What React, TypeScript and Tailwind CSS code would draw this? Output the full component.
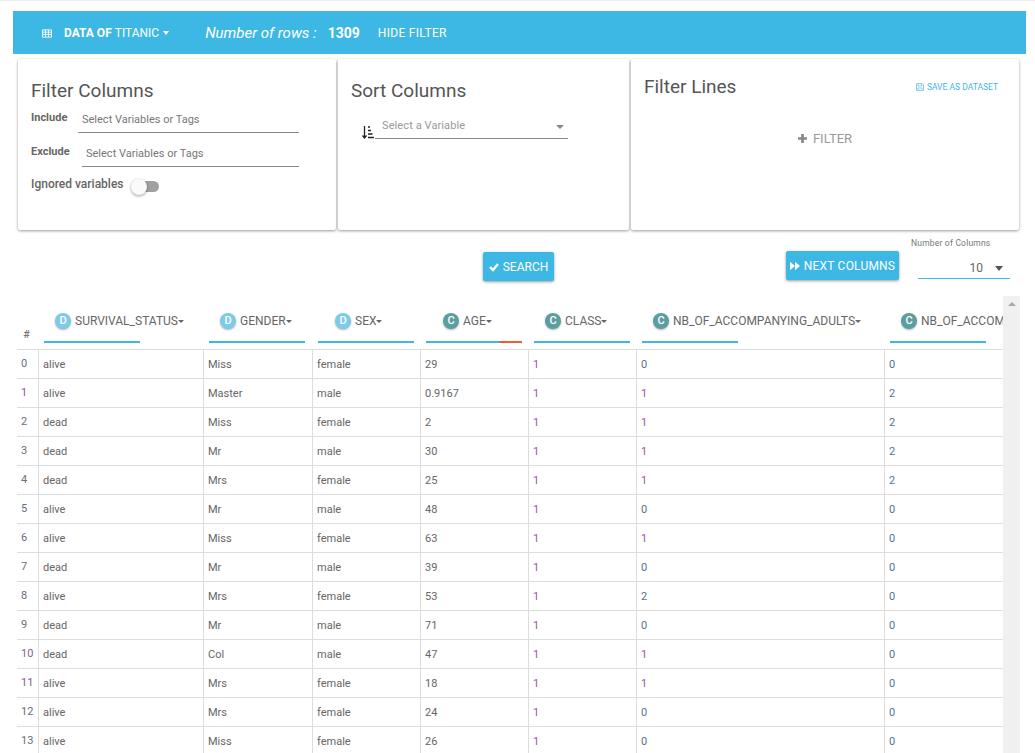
const rows = [
  ["0", "alive", "Miss", "female", "29", "1", "0", "0"],
  ["1", "alive", "Master", "male", "0.9167", "1", "1", "2"],
  ["2", "dead", "Miss", "female", "2", "1", "1", "2"],
  ["3", "dead", "Mr", "male", "30", "1", "1", "2"],
  ["4", "dead", "Mrs", "female", "25", "1", "1", "2"],
  ["5", "alive", "Mr", "male", "48", "1", "0", "0"],
  ["6", "alive", "Miss", "female", "63", "1", "1", "0"],
  ["7", "dead", "Mr", "male", "39", "1", "0", "0"],
  ["8", "alive", "Mrs", "female", "53", "1", "2", "0"],
  ["9", "dead", "Mr", "male", "71", "1", "0", "0"],
  ["10", "dead", "Col", "male", "47", "1", "1", "0"],
  ["11", "alive", "Mrs", "female", "18", "1", "1", "0"],
  ["12", "alive", "Mrs", "female", "24", "1", "0", "0"],
  ["13", "alive", "Miss", "female", "26", "1", "0", "0"],
]

const widths = ["w-[22px]", "w-[165px]", "w-[109px]", "w-[108px]", "w-[108px]", "w-[108px]", "w-[248px]", "w-[119px]"]

function Caret({ className }: { className: string }) {
  return <span className={`inline-block h-0 w-0 border-x-transparent ${className}`} />
}

function ColumnHead({ kind, name, width, pad, caret = true, warn = false }: { kind: string; name: string; width: string; pad: string; caret?: boolean; warn?: boolean }) {
  const badge = kind === "D" ? "bg-[#7ccbe9]" : "bg-[#5b9ea0]"
  return (
    <div className={`shrink-0 ${width}`}>
      <div className={`flex h-[26px] items-center whitespace-nowrap ${pad}`}>
        <span className={`mr-[4px] flex h-4 w-4 shrink-0 items-center justify-center rounded-full text-[11px] font-medium text-white shadow-[0_1px_2px_rgba(0,0,0,0.3)] ${badge}`}>{kind}</span>
        <span className="text-xs text-[#666]">{name}</span>
        {caret && <Caret className="border-x-[3px] border-t-[3px] border-t-[#666]" />}
      </div>
      <div className="ml-[5px] mt-[7px] flex h-[2px] w-[96px] bg-[#3db7e4]">
        {warn && <div className="ml-auto h-full w-[23px] bg-[#ee5d35]" />}
      </div>
    </div>
  )
}

// thin digits come out tinted in the reference
function cellColor(i: number, value: string) {
  if (i === 0) return value === "1" || value === "10" || value === "11" ? "text-[#85608f] -mt-[2px]" : "text-[#62707e] -mt-[2px]"
  if (i >= 5) return value === "1" ? "text-[#96589e]" : "text-[#56748f]"
  return "text-[#666]"
}

export default function App() {
  return (
    <div className="h-[753px] w-[1035px] overflow-hidden bg-white font-['Roboto','Liberation_Sans',sans-serif]">
      <div className="h-px bg-[#eee]" />
      <div className="ml-[13px] mt-[10px] flex h-[43px] w-[1013px] items-center bg-[#3db7e4] pl-[29px] pt-px text-white">
        <svg viewBox="0 0 11 9" className="h-[9px] w-[10px]" fill="none" stroke="white" strokeWidth="1">
          <path d="M.5.5h10v8H.5zM.5 3h10M.5 5.500h10M3.800 .5v8M7.200 .5v8" />
        </svg>
        <span className="ml-[12px] text-xs font-bold">DATA OF <span className="font-normal">TITANIC</span></span>
        <Caret className="ml-[4px] border-x-[3px] border-t-[4px] border-t-white" />
        <span className="ml-[36px] text-[15px] italic">Number of rows :</span>
        <span className="ml-[11px] text-sm font-bold">1309</span>
        <span className="ml-[18px] text-xs tracking-[0.3px]">HIDE FILTER</span>
      </div>

      <div className="ml-[18px] mt-[5px] flex h-[171px] w-[1001px] gap-[2px]">
        <div className="w-[318px] rounded-[2px] bg-white pl-[13px] pt-[20px] shadow-[0_1px_3px_rgba(0,0,0,0.4)]">
          <h2 className="text-[19px] leading-[24px] text-[#555]">Filter Columns</h2>
          <div className="mt-[5px] flex items-start">
            <span className="mt-[2px] w-[47px] text-[11px] font-bold leading-[16px] text-[#666]">Include</span>
            <div className="h-[25px] w-[221px] border-b border-[#888] pl-[4px] text-[11px] leading-[23px] text-[#777]">Select Variables or Tags</div>
          </div>
          <div className="mt-[9px] flex items-start">
            <span className="mt-[2px] w-[51px] text-[11px] font-bold leading-[16px] text-[#666]">Exclude</span>
            <div className="h-[25px] w-[217px] border-b border-[#888] pl-[4px] text-[11px] leading-[23px] text-[#777]">Select Variables or Tags</div>
          </div>
          <div className="mt-[9px] flex items-start">
            <span className="text-xs font-medium leading-[16px] text-[#666]">Ignored variables</span>
            <div className="relative ml-[8px] mt-[5px] h-[11px] w-[27px] rounded-full bg-[#a0a0a0]">
              <div className="absolute -left-[1px] -top-[2px] h-[16px] w-[16px] rounded-full bg-[#fafafa] shadow-[0_1px_3px_rgba(0,0,0,0.4)]" />
            </div>
          </div>
        </div>

        <div className="w-[291px] rounded-[2px] bg-white pl-[13px] pt-[20px] shadow-[0_1px_3px_rgba(0,0,0,0.4)]">
          <h2 className="text-[19px] leading-[24px] text-[#555]">Sort Columns</h2>
          <div className="ml-[11px] mt-[11px] flex items-end">
            <svg viewBox="0 0 12 13" className="h-[13px] w-3" fill="none" stroke="#222" strokeWidth="1.300">
              <path d="M2.500 0v12M.5 9.500l2 2.500 2-2.500M6 1h2M6 4.500h3M6 8h4.500M6 11.500h6" />
            </svg>
            <div className="ml-px flex h-[25px] w-[193px] items-start justify-between border-b border-[#888] pl-[7px] pr-[4px] text-[11px] leading-[23px] tracking-[0.1px] text-[#999]">
              <span>Select a Variable</span>
              <Caret className="mt-[11px] border-x-[4px] border-t-[4px] border-t-[#888]" />
            </div>
          </div>
        </div>

        <div className="w-[388px] rounded-[2px] bg-white pl-[13px] pt-[16px] shadow-[0_1px_3px_rgba(0,0,0,0.4)]">
          <div className="flex h-[24px] items-center justify-between pr-[21px]">
            <h2 className="text-[19px] leading-[24px] text-[#555]">Filter Lines</h2>
            <span className="flex items-center gap-[3px] text-[8.500px] text-[#3db7e4]">
              <svg viewBox="0 0 8 8" className="h-2 w-2" fill="none" stroke="#8ccde8" strokeWidth="1"><path d="M.5.5h5.500l1.500 1.500v5.500h-7zM2 .5v2.500h3.500V.5M2 7.500V5h4v2.500" /></svg>
              SAVE AS DATASET
            </span>
          </div>
          <div className="mt-[30px] flex h-[20px] items-center justify-center pr-[13px] text-[13px] text-[#999]">
            <svg viewBox="0 0 10 10" className="mb-[2px] mr-[6px] h-[9px] w-[9px]" fill="#888"><path d="M3.500 0h3v3.500H10v3H6.500V10h-3V6.500H0v-3h3.500z" /></svg>
            FILTER
          </div>
        </div>
      </div>

      <div className="relative h-[66px]">
        <div className="absolute left-[483px] top-[22px] flex h-[29px] w-[71px] items-center justify-center gap-[4px] rounded-[2px] bg-[#3db7e4] text-xs text-white shadow-[0_1px_3px_rgba(0,0,0,0.4)]">
          <svg viewBox="0 0 10 10" className="h-[10px] w-[10px]" fill="none" stroke="white" strokeWidth="2.400"><path d="M1 5l3 3 5-6" /></svg>
          SEARCH
        </div>
        <div className="absolute left-[786px] top-[21px] flex h-[29px] w-[113px] items-center justify-center gap-[4px] rounded-[2px] bg-[#3db7e4] text-xs tracking-[0.2px] text-white shadow-[0_1px_3px_rgba(0,0,0,0.4)]">
          <svg viewBox="0 0 12 10" className="h-[10px] w-[10px]" fill="white"><path d="M0 0l6 5-6 5zM6 0l6 5-6 5z" /></svg>
          NEXT COLUMNS
        </div>
        <div className="absolute left-[911px] top-[7px] text-[8.500px] tracking-[0.2px] text-[#777]">Number of Columns</div>
        <div className="absolute left-[918px] top-[24px] flex h-[25px] w-[92px] items-center justify-end gap-[12px] border-b border-[#3db7e4] pr-[7px] pt-[4px] text-xs text-[#666]">
          <span>10</span>
          <Caret className="border-x-[4px] border-t-[5px] border-t-[#555]" />
        </div>
      </div>

      <div className="flex h-[457px] w-[1020px]">
        <div className="w-[1003px] shrink-0 overflow-hidden pl-[17px]">
          <div className="flex h-[54px] items-end border-b border-[#ddd] pb-[6px]">
            <div className="w-[22px] shrink-0 pl-[6px] text-[11px] text-[#666]">#</div>
            <ColumnHead kind="D" name="SURVIVAL_STATUS" width="w-[165px]" pad="pl-[16px]" />
            <ColumnHead kind="D" name="GENDER" width="w-[109px]" pad="pl-[16px]" />
            <ColumnHead kind="D" name="SEX" width="w-[108px]" pad="pl-[22px]" />
            <ColumnHead kind="C" name="AGE" width="w-[108px]" pad="pl-[22px]" warn />
            <ColumnHead kind="C" name="CLASS" width="w-[108px]" pad="pl-[16px]" />
            <ColumnHead kind="C" name="NB_OF_ACCOMPANYING_ADULTS" width="w-[248px]" pad="pl-[16px]" />
            <ColumnHead kind="C" name="NB_OF_ACCOMPANYING_CHILDREN" width="w-[119px]" pad="pl-[16px]" caret={false} />
          </div>
          {rows.map((row) => (
            <div key={row[0]} className="flex h-[29px] border-b border-[#ddd]">
              {row.map((value, i) => (
                <div key={i} className={`flex shrink-0 items-center border-r border-[#ddd] pl-1 pt-[2px] text-[11px] ${widths[i]}`}>
                  <span className={cellColor(i, value)}>{value}</span>
                </div>
              ))}
            </div>
          ))}
        </div>
        <div className="flex w-[17px] shrink-0 justify-center bg-[#f0f0f0] pt-[6px]">
          <span className="h-0 w-0 border-x-[4px] border-b-[4px] border-x-transparent border-b-[#a8a8a8]" />
        </div>
      </div>
    </div>
  )
}
